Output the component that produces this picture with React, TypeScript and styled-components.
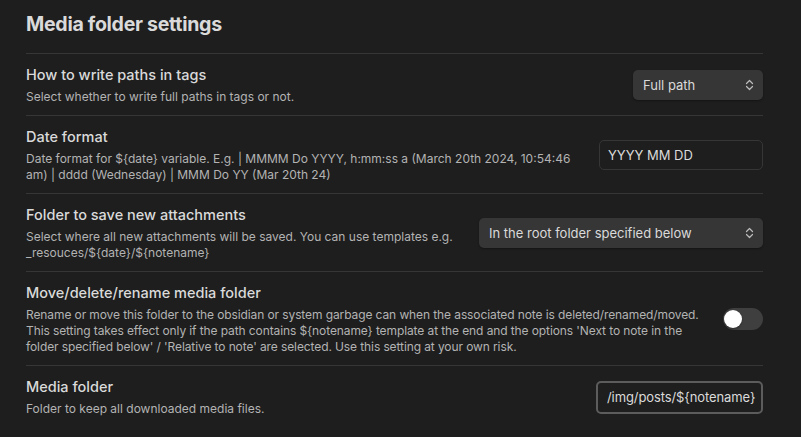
import React from "react";
import styled, { createGlobalStyle } from "styled-components";

const Global = createGlobalStyle`
  html, body { margin: 0; padding: 0; background: #1e1e1e; }
  body { font-family: Inter, "Noto Sans", "Liberation Sans", sans-serif; color: #dadada; -webkit-font-smoothing: antialiased; }
`;

const Page = styled.div`
  width: 801px;
  height: 437px;
  overflow: hidden;
  box-sizing: border-box;
  padding: 0 38px 0 26px;
  background: #1e1e1e;
`;

const Title = styled.h2`
  margin: 0;
  padding: 11px 0 16px;
  font-size: 19.6px;
  line-height: 26px;
  font-weight: 700;
  letter-spacing: -0.3px;
  color: #dadada;
`;

const Item = styled.div`
  display: flex;
  align-items: center;
  border-top: 1px solid #363636;
  padding: 11px 0 10px;
`;

const Info = styled.div`
  flex: 1 1 auto;
  min-width: 0;
  margin-right: 16px;
`;

const Name = styled.div`
  font-size: 14.5px;
  line-height: 19px;
  color: #dadada;
  font-weight: 500;
`;

const Desc = styled.div<{ $tight?: boolean }>`
  padding-top: 5px;
  font-size: 12px;
  line-height: 16px;
  color: #b3b3b3;
  letter-spacing: ${(p) => (p.$tight ? "-0.1px" : "0")};
  white-space: ${(p) => (p.$tight ? "nowrap" : "normal")};
`;

const Control = styled.div`
  flex: 0 0 auto;
  display: flex;
  align-items: center;
`;

const SelectBox = styled.div<{ $w: number }>`
  position: relative;
  box-sizing: border-box;
  width: ${(p) => p.$w}px;
  height: 30px;
  border-radius: 5px;
  background: #363636;
  box-shadow: 0 1px 2px rgba(0, 0, 0, 0.35);
  display: flex;
  align-items: center;
  padding: 0 10px;
  font-size: 13px;
  color: #dadada;
`;

const Chevron = styled.svg`
  position: absolute;
  right: 9px;
  top: 9px;
`;

const Field = styled.div<{ $w: number; $focus?: boolean }>`
  box-sizing: border-box;
  width: ${(p) => p.$w}px;
  height: ${(p) => (p.$focus ? 33 : 30)}px;
  border-radius: 5px;
  background: #1e1e1e;
  border: ${(p) => (p.$focus ? "2px solid #5c5c5c" : "1px solid #363636")};
  display: flex;
  align-items: center;
  padding: 0 ${(p) => (p.$focus ? 9 : 8)}px;
  font-size: 13px;
  letter-spacing: ${(p) => (p.$focus ? "-0.1px" : "0")};
  color: #dadada;
  white-space: nowrap;
`;

const Caret = styled.span`
  display: inline-block;
  width: 1px;
  height: 16px;
  background: #dadada;
  margin-left: -1px;
`;

const Toggle = styled.div`
  position: relative;
  width: 40px;
  height: 22px;
  border-radius: 11px;
  background: #3f3f3f;
`;

const Knob = styled.div`
  position: absolute;
  left: 1px;
  top: 2px;
  width: 18px;
  height: 18px;
  border-radius: 50%;
  background: #fff;
  box-shadow: 0 1px 2px rgba(0, 0, 0, 0.3);
`;

const Select = ({ w, value }: { w: number; value: string }) => (
  <SelectBox $w={w}>
    {value}
    <Chevron width="9" height="12" viewBox="0 0 9 12" fill="none" stroke="#bdbdbd" strokeWidth="1.2" strokeLinecap="round" strokeLinejoin="round">
      <path d="M1.5 4.5 L4.5 1.5 L7.5 4.5" />
      <path d="M1.5 7.5 L4.5 10.5 L7.5 7.5" />
    </Chevron>
  </SelectBox>
);

export default function App() {
  return (
    <Page>
      <Global />
      <Title>Media folder settings</Title>
      <Item>
        <Info>
          <Name>How to write paths in tags</Name>
          <Desc>Select whether to write full paths in tags or not.</Desc>
        </Info>
        <Control>
          <Select w={130} value="Full path" />
        </Control>
      </Item>
      <Item>
        <Info>
          <Name>Date format</Name>
          <Desc>
            Date format for ${"{date}"} variable. E.g. | MMMM Do YYYY, h:mm:ss a (March 20th 2024, 10:54:46
            <br />
            am) | dddd (Wednesday) | MMM Do YY (Mar 20th 24)
          </Desc>
        </Info>
        <Control>
          <Field $w={164}>YYYY MM DD</Field>
        </Control>
      </Item>
      <Item>
        <Info>
          <Name>Folder to save new attachments</Name>
          <Desc>
            Select where all new attachments will be saved. You can use templates e.g.
            <br />
            _resouces/${"{date}"}/${"{notename}"}
          </Desc>
        </Info>
        <Control>
          <Select w={284} value="In the root folder specified below" />
        </Control>
      </Item>
      <Item>
        <Info>
          <Name>Move/delete/rename media folder</Name>
          <Desc $tight>
            Rename or move this folder to the obsidian or system garbage can when the associated note is deleted/renamed/moved.
            <br />
            This setting takes effect only if the path contains ${"{notename}"} template at the end and the options 'Next to note in the
            <br />
            folder specified below' / 'Relative to note' are selected. Use this setting at your own risk.
          </Desc>
        </Info>
        <Control>
          <Toggle>
            <Knob />
          </Toggle>
        </Control>
      </Item>
      <Item>
        <Info>
          <Name>Media folder</Name>
          <Desc>Folder to keep all downloaded media files.</Desc>
        </Info>
        <Control>
          <Field $w={167} $focus>
            /img/posts/${"{notename}"}
            <Caret />
          </Field>
        </Control>
      </Item>
    </Page>
  );
}
